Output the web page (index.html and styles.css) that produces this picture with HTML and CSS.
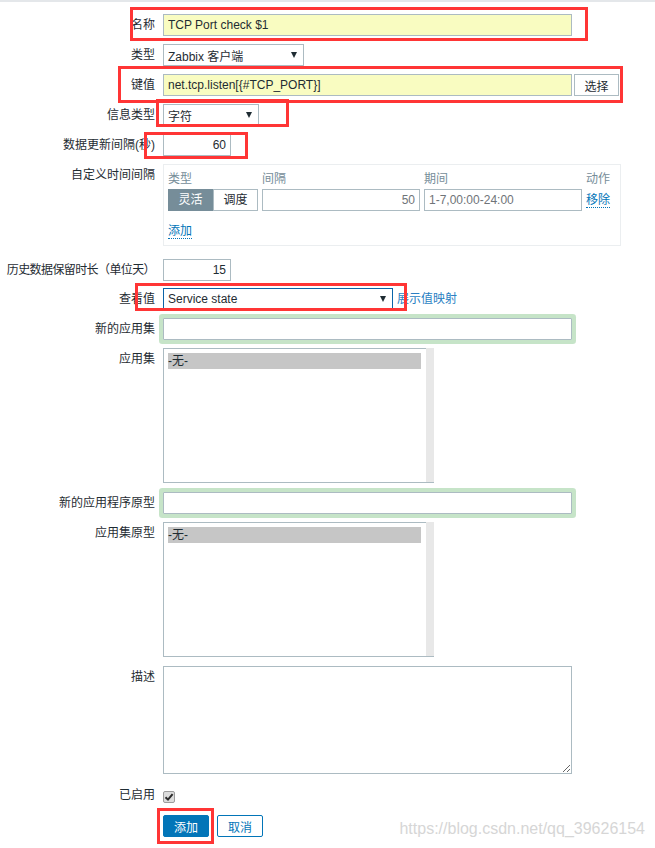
FILE: index.html
```html
<!DOCTYPE html>
<html lang="zh-CN">
<head>
    <meta charset="UTF-8">
    <meta name="viewport" content="width=device-width, initial-scale=1.0">
    <title>监控项</title>
    <link rel="stylesheet" href="styles.css">
</head>
<body>
    <div class="top-rule"></div>

    <div class="form-list">
        <div class="form-row">
            <label class="form-label">名称</label>
            <div class="form-field">
                <input type="text" class="text-box hint w-wide" value="TCP Port check $1">
            </div>
        </div>

        <div class="form-row">
            <label class="form-label">类型</label>
            <div class="form-field">
                <div class="select-box w-type"><span>Zabbix 客户端</span><span class="select-arrow"></span></div>
            </div>
        </div>

        <div class="form-row">
            <label class="form-label">键值</label>
            <div class="form-field gap-2">
                <input type="text" class="text-box hint w-wide" value="net.tcp.listen[{#TCP_PORT}]">
                <button class="btn-alt">选择</button>
            </div>
        </div>

        <div class="form-row">
            <label class="form-label">信息类型</label>
            <div class="form-field">
                <div class="select-box w-info"><span>字符</span><span class="select-arrow"></span></div>
            </div>
        </div>

        <div class="form-row">
            <label class="form-label">数据更新间隔(秒)</label>
            <div class="form-field">
                <input type="text" class="text-box num w-num" value="60">
            </div>
        </div>

        <div class="form-row row-interval">
            <label class="form-label">自定义时间间隔</label>
            <div class="form-field">
                <div class="interval-box">
                    <div class="interval-grid">
                        <div class="interval-head">类型</div>
                        <div class="interval-head">间隔</div>
                        <div class="interval-head">期间</div>
                        <div class="interval-head">动作</div>

                        <div class="radio-group">
                            <span class="radio-btn active">灵活</span>
                            <span class="radio-btn">调度</span>
                        </div>
                        <input type="text" class="text-box num dim" value="50">
                        <input type="text" class="text-box dim" value="1-7,00:00-24:00">
                        <div class="cell-link"><a class="link-dotted">移除</a></div>
                    </div>
                    <div class="interval-add"><a class="link-dotted">添加</a></div>
                </div>
            </div>
        </div>

        <div class="form-row row-tight">
            <label class="form-label label-narrow">历史数据保留时长（单位天）</label>
            <div class="form-field">
                <input type="text" class="text-box num w-num" value="15">
            </div>
        </div>

        <div class="form-row">
            <label class="form-label">查看值</label>
            <div class="form-field gap-4">
                <div class="select-box focused w-map"><span>Service state</span><span class="select-arrow"></span></div>
                <a class="link-plain">展示值映射</a>
            </div>
        </div>

        <div class="form-row">
            <label class="form-label">新的应用集</label>
            <div class="form-field">
                <input type="text" class="text-box glow w-wide" value="">
            </div>
        </div>

        <div class="form-row row-list">
            <label class="form-label">应用集</label>
            <div class="form-field">
                <div class="list-box">
                    <div class="list-items"><div class="list-item selected">-无-</div></div>
                    <div class="list-scroll"></div>
                </div>
            </div>
        </div>

        <div class="form-row">
            <label class="form-label">新的应用程序原型</label>
            <div class="form-field">
                <input type="text" class="text-box glow w-wide" value="">
            </div>
        </div>

        <div class="form-row row-list">
            <label class="form-label">应用集原型</label>
            <div class="form-field">
                <div class="list-box">
                    <div class="list-items"><div class="list-item selected">-无-</div></div>
                    <div class="list-scroll"></div>
                </div>
            </div>
        </div>

        <div class="form-row row-desc">
            <label class="form-label">描述</label>
            <div class="form-field">
                <textarea class="text-area"></textarea>
            </div>
        </div>

        <div class="form-row row-check">
            <label class="form-label">已启用</label>
            <div class="form-field">
                <span class="check-box">
                    <svg width="10" height="10" viewBox="0 0 10 10"><path d="M1.5 5.2 L4 7.6 L8.6 2.2" fill="none" stroke="#2b2b2b" stroke-width="2"/></svg>
                </span>
            </div>
        </div>

        <div class="form-row">
            <label class="form-label"></label>
            <div class="form-field gap-8">
                <button class="btn-main">添加</button>
                <button class="btn-cancel">取消</button>
            </div>
        </div>
    </div>

    <!-- annotations drawn over the form -->
    <div class="mark mark-name"></div>
    <div class="mark mark-key"></div>
    <div class="mark mark-info"></div>
    <div class="mark mark-delay"></div>
    <div class="mark mark-map"></div>
    <div class="mark mark-add"></div>

    <div class="watermark">https://blog.csdn.net/qq_39626154</div>
</body>
</html>
```

FILE: styles.css
```css
* {
    box-sizing: border-box;
}
body {
    position: relative;
    margin: 0;
    font-family: "Liberation Sans", "Noto Sans CJK SC", sans-serif;
    font-size: 12px;
    color: #1f2c33;
    background: #fff;
}
input, button, textarea {
    font: inherit;
    color: inherit;
}
.top-rule {
    height: 2px;
    background: #e4e7ea;
}
.form-list {
    padding-top: 12px;
}
.form-row {
    display: grid;
    grid-template-columns: 155px 1fr;
    column-gap: 8px;
    margin-bottom: 8px;
}
.row-interval {
    margin-bottom: 13px;
}
.row-tight {
    margin-bottom: 7px;
}
.row-list {
    margin-bottom: 9px;
}
.row-desc {
    margin-bottom: 10px;
}
.row-check {
    margin-bottom: 9px;
}
.form-label {
    display: flex;
    justify-content: flex-end;
    line-height: 22px;
    white-space: nowrap;
}
.label-narrow {
    letter-spacing: -0.6px;
}
.form-field {
    display: flex;
    align-items: flex-start;
}
.gap-2 { gap: 2px; }
.gap-4 { gap: 4px; }
.gap-8 { gap: 8px; }

.text-box {
    height: 22px;
    border: 1px solid #acbbc2;
    padding: 0 4px;
    background: #fff;
    outline: none;
}
.text-box.hint {
    background: #f9fcc1;
}
.text-box.num {
    text-align: right;
}
.text-box.dim {
    color: #6f7478;
    width: 158px;
}
.text-box.glow {
    box-shadow: 0 0 0 4px #c6e4c8;
    border-radius: 1px;
}
.w-wide { width: 409px; }
.w-num { width: 68px; }
.w-type { width: 141px; }
.w-info { width: 96px; }
.w-map { width: 230px; }

.select-box {
    display: flex;
    align-items: center;
    justify-content: space-between;
    height: 22px;
    border: 1px solid #acbbc2;
    padding: 0 6px 0 4px;
    background: #fff;
    white-space: nowrap;
}
.select-box.focused {
    border-color: #0b64a8;
}
.select-arrow {
    width: 0;
    height: 0;
    border-left: 3.5px solid transparent;
    border-right: 3.5px solid transparent;
    border-top: 6px solid #1f2c33;
}
.btn-alt {
    width: 45px;
    height: 22px;
    border: 1px solid #acbbc2;
    background: #fff;
    padding: 0;
}
.link-plain {
    line-height: 22px;
    color: #2a7fc3;
    white-space: nowrap;
}
.link-dotted {
    display: inline-block;
    line-height: 14px;
    color: #0275b8;
    border-bottom: 1px dotted #0275b8;
}

.interval-box {
    width: 458px;
    border: 1px solid #ebeef0;
    padding: 4px 4px 6px 4px;
}
.interval-grid {
    display: grid;
    grid-template-columns: 90px 158px 158px auto;
    column-gap: 4px;
}
.interval-head {
    line-height: 20px;
    color: #768d99;
}
.radio-group {
    display: flex;
}
.radio-btn {
    width: 45px;
    height: 22px;
    line-height: 20px;
    text-align: center;
    border: 1px solid #acbbc2;
    background: #fff;
}
.radio-btn.active {
    background: #768d99;
    border-color: #768d99;
    color: #fff;
}
.cell-link {
    display: flex;
    align-items: center;
    height: 22px;
}
.interval-add {
    margin-top: 13px;
}

.list-box {
    display: flex;
    width: 271px;
    height: 135px;
    border: 1px solid #acbbc2;
    border-right: 0;
}
.list-items {
    flex: 1;
    padding: 4px 5px 0 4px;
}
.list-item {
    line-height: 16px;
    height: 16px;
}
.list-item.selected {
    background: #c6c6c6;
}
.list-scroll {
    width: 8px;
    margin-top: -1px;
    background: #e8e8e8;
}

.text-area {
    display: block;
    width: 409px;
    height: 108px;
    border: 1px solid #acbbc2;
    padding: 4px;
    outline: none;
}
.check-box {
    display: flex;
    align-items: center;
    justify-content: center;
    width: 12px;
    height: 12px;
    margin-top: 7px;
    border: 1px solid #9c9c9c;
    border-radius: 2px;
    background: #dcdcdc;
}
.btn-main, .btn-cancel {
    width: 46px;
    height: 22px;
    padding: 0;
    border-radius: 2px;
    border: 1px solid #0275b8;
}
.btn-main {
    background: #0275b8;
    color: #fff;
}
.btn-cancel {
    background: #fff;
    color: #0275b8;
}

.mark {
    position: absolute;
    border: 3px solid #ff3535;
}
.mark-name { left: 130px; top: 7px; width: 458px; height: 34px; }
.mark-key { left: 118px; top: 66px; width: 505px; height: 37px; }
.mark-info { left: 156px; top: 99px; width: 133px; height: 28px; }
.mark-delay { left: 144px; top: 132px; width: 104px; height: 27px; }
.mark-map { left: 135px; top: 283px; width: 272px; height: 28px; }
.mark-add { left: 157px; top: 808px; width: 57px; height: 36px; }

.watermark {
    position: absolute;
    right: 10px;
    top: 820px;
    font-size: 16px;
    line-height: 18px;
    color: #d6d6d6;
}
```
